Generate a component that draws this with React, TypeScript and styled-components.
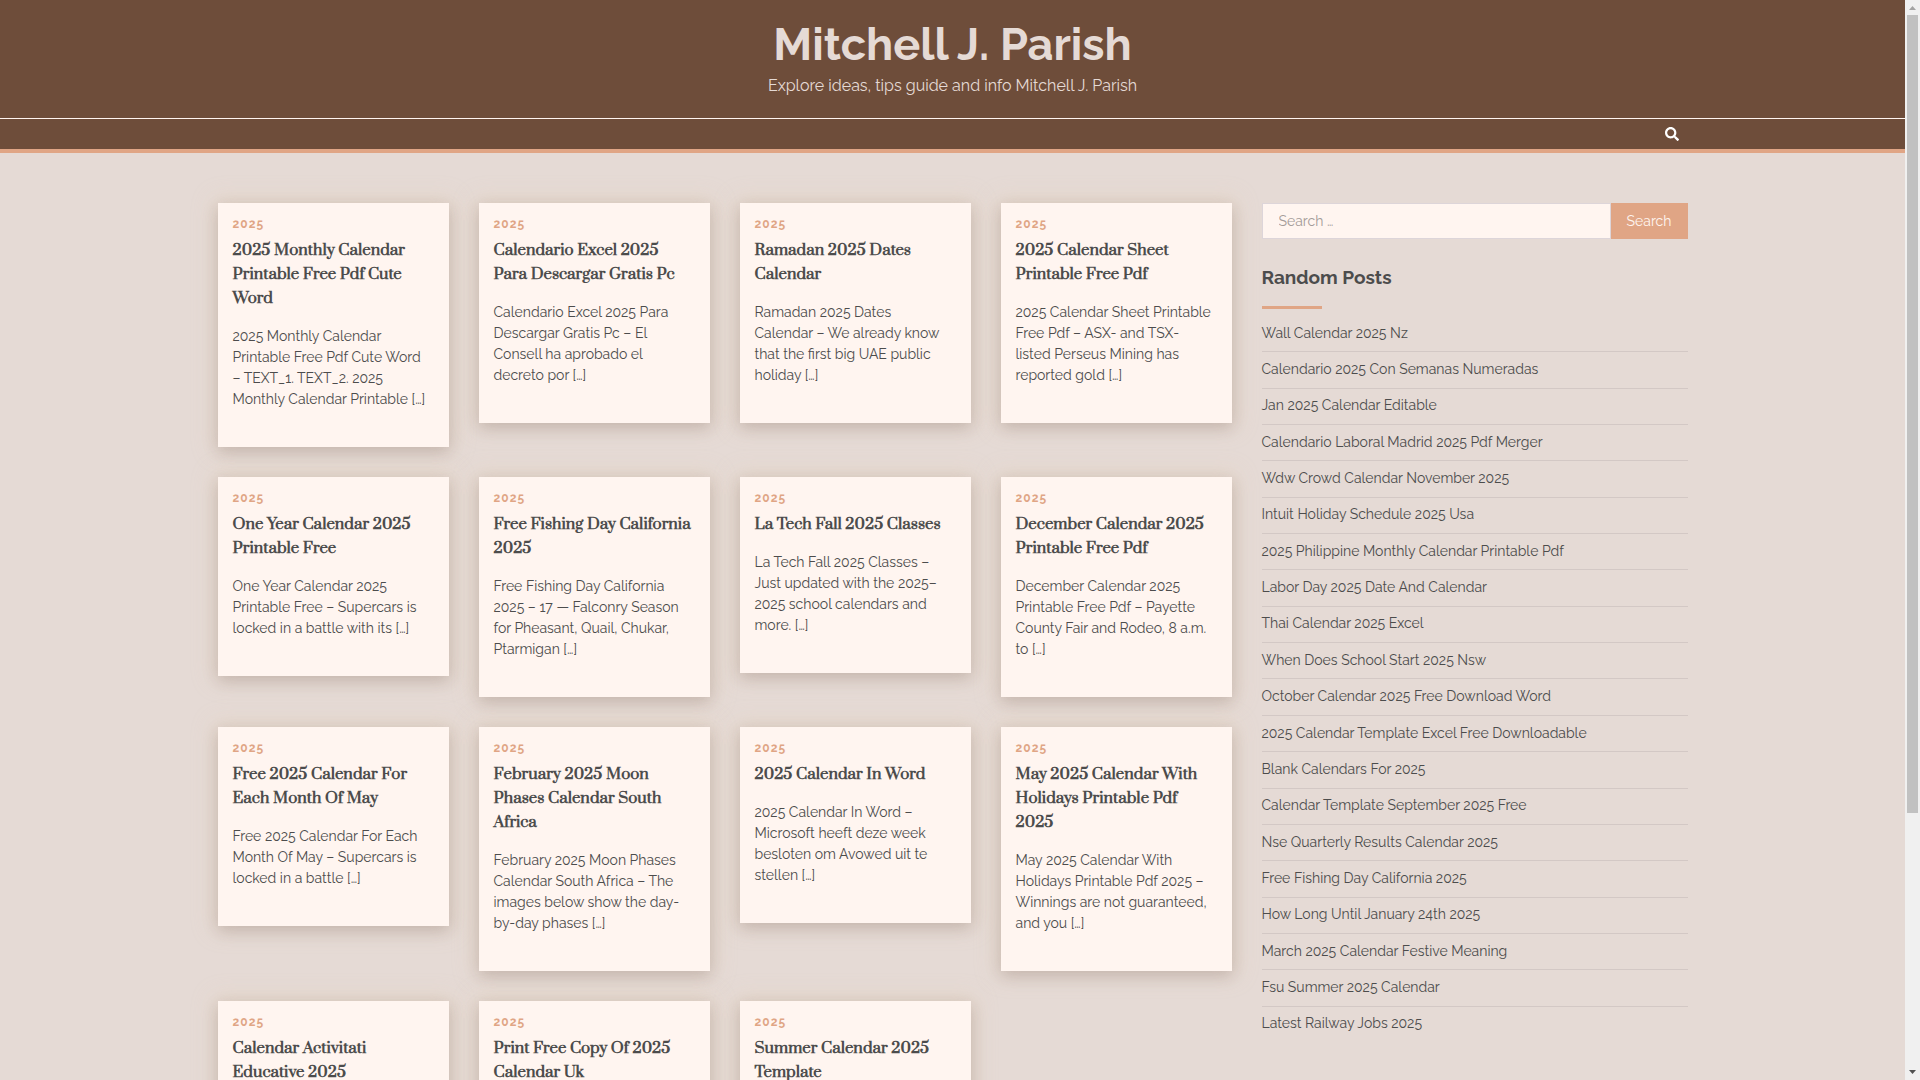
import React from 'react';
import styled, { createGlobalStyle } from 'styled-components';
import { FaSearch } from 'react-icons/fa';

const sans = "Raleway, Lato, 'Open Sans', sans-serif";
const serif = "Prata, 'Liberation Serif', serif";

const color = {
  brown: '#6e4d3a',
  accent: '#e0a585',
  page: '#e5dad5',
  card: '#fff5f0',
  text: '#4c4c4c',
};

const GlobalStyle = createGlobalStyle`
  *, *::before, *::after { box-sizing: border-box; }
  body {
    margin: 0;
    background: ${color.page};
    color: ${color.text};
    font-family: ${sans};
    font-size: 14px;
  }
  a { color: inherit; text-decoration: none; }
`;

const Window = styled.div`
  display: flex;
  height: 100vh;
  overflow: hidden;
`;

const Page = styled.div`
  flex: 1;
  min-width: 0;
  overflow: hidden;
`;

const Masthead = styled.header`
  background: ${color.brown};
  border-bottom: 4px solid ${color.accent};
`;

const Branding = styled.div`
  display: flex;
  flex-direction: column;
  align-items: center;
  gap: 5px;
  padding: 21px 16px 20px;
  border-bottom: 1px solid ${color.card};
  color: ${color.page};
`;

const SiteTitle = styled.h1`
  margin: 0;
  font-size: 45px;
  font-weight: 700;
  line-height: 48px;
`;

const Tagline = styled.p`
  margin: 0;
  font-size: 16px;
  line-height: 24px;
`;

const Container = styled.div`
  width: 100%;
  max-width: 1470px;
  margin: 0 auto;
`;

const Nav = styled.nav`
  display: flex;
  justify-content: flex-end;
`;

const IconButton = styled.button`
  display: flex;
  align-items: center;
  height: 30px;
  padding: 0 9px;
  border: 0;
  background: none;
  color: #fff;
  font-size: 14px;
`;

const Content = styled(Container)`
  display: grid;
  grid-template-columns: minmax(0, 1014fr) minmax(0, 426fr);
  gap: 30px;
  padding-top: 50px;
`;

const Posts = styled.main`
  display: grid;
  grid-template-columns: repeat(4, minmax(0, 1fr));
  align-content: start;
  align-items: start;
  gap: 30px;
`;

const Card = styled.article`
  padding: 12px 15px 37px;
  background: ${color.card};
  box-shadow: 0 5px 15px rgba(50, 30, 40, 0.18), 0 0 20px 4px rgba(229, 205, 175, 0.35);
`;

const Category = styled.a`
  display: block;
  color: ${color.accent};
  font-size: 12px;
  font-weight: 700;
  letter-spacing: 1px;
  line-height: 18px;
`;

const CardTitle = styled.h2`
  margin: 5px 0 16px;
  font-family: ${serif};
  font-size: 15px;
  font-weight: 700;
  line-height: 24px;
`;

const Excerpt = styled.p`
  margin: 0;
  line-height: 21px;
`;

const SearchForm = styled.form`
  display: flex;
  height: 36px;
`;

const HiddenLabel = styled.label`
  position: absolute;
  width: 1px;
  height: 1px;
  overflow: hidden;
  clip-path: inset(50%);
`;

const SearchInput = styled.input`
  flex: 1;
  min-width: 0;
  padding: 0 16px;
  border: 1px solid #ddd5d9;
  border-radius: 0;
  background: ${color.card};
  color: ${color.text};
  font: 14px ${sans};
  &::placeholder { color: #a39b98; opacity: 1; }
`;

const SearchSubmit = styled.button`
  width: 77px;
  padding: 0;
  border: 0;
  background: ${color.accent};
  color: ${color.card};
  font: 14px ${sans};
`;

const WidgetTitle = styled.h2`
  margin: 26px 0 7px;
  font-size: 19px;
  font-weight: 700;
  line-height: 24px;
  &::after {
    content: '';
    display: block;
    width: 60px;
    height: 3px;
    margin-top: 17px;
    background: ${color.accent};
  }
`;

const PostList = styled.ul`
  display: grid;
  grid-auto-rows: 1fr;
  min-height: 727px;
  margin: 0;
  padding: 0;
  list-style: none;
`;

const PostItem = styled.li`
  display: flex;
  align-items: center;
  padding-bottom: 2px;
  border-bottom: 1px solid #d3c8c5;
  &:last-child { border-bottom-color: transparent; }
`;

const Scrollbar = styled.div`
  display: flex;
  flex-direction: column;
  align-items: center;
  width: 15px;
  background: #f0f0f0;
`;

const ScrollArrow = styled.svg`
  flex: none;
  width: 15px;
  height: 15px;
`;

const ScrollTrack = styled.div`
  flex: 1;
  width: 11px;
`;

const ScrollThumb = styled.div`
  height: 76%;
  background: #c1c1c1;
`;

type Post = { title: string[]; excerpt: string[] };

const posts: Post[] = [
  {
    title: ['2025 Monthly Calendar', 'Printable Free Pdf Cute', 'Word'],
    excerpt: ['2025 Monthly Calendar', 'Printable Free Pdf Cute Word', '– TEXT_1. TEXT_2. 2025', 'Monthly Calendar Printable […]'],
  },
  {
    title: ['Calendario Excel 2025', 'Para Descargar Gratis Pc'],
    excerpt: ['Calendario Excel 2025 Para', 'Descargar Gratis Pc – El', 'Consell ha aprobado el', 'decreto por […]'],
  },
  {
    title: ['Ramadan 2025 Dates', 'Calendar'],
    excerpt: ['Ramadan 2025 Dates', 'Calendar – We already know', 'that the first big UAE public', 'holiday […]'],
  },
  {
    title: ['2025 Calendar Sheet', 'Printable Free Pdf'],
    excerpt: ['2025 Calendar Sheet Printable', 'Free Pdf – ASX- and TSX-', 'listed Perseus Mining has', 'reported gold […]'],
  },
  {
    title: ['One Year Calendar 2025', 'Printable Free'],
    excerpt: ['One Year Calendar 2025', 'Printable Free – Supercars is', 'locked in a battle with its […]'],
  },
  {
    title: ['Free Fishing Day California', '2025'],
    excerpt: ['Free Fishing Day California', '2025 – 17 — Falconry Season', 'for Pheasant, Quail, Chukar,', 'Ptarmigan […]'],
  },
  {
    title: ['La Tech Fall 2025 Classes'],
    excerpt: ['La Tech Fall 2025 Classes –', 'Just updated with the 2025–', '2025 school calendars and', 'more. […]'],
  },
  {
    title: ['December Calendar 2025', 'Printable Free Pdf'],
    excerpt: ['December Calendar 2025', 'Printable Free Pdf – Payette', 'County Fair and Rodeo, 8 a.m.', 'to […]'],
  },
  {
    title: ['Free 2025 Calendar For', 'Each Month Of May'],
    excerpt: ['Free 2025 Calendar For Each', 'Month Of May – Supercars is', 'locked in a battle […]'],
  },
  {
    title: ['February 2025 Moon', 'Phases Calendar South', 'Africa'],
    excerpt: ['February 2025 Moon Phases', 'Calendar South Africa – The', 'images below show the day-', 'by-day phases […]'],
  },
  {
    title: ['2025 Calendar In Word'],
    excerpt: ['2025 Calendar In Word –', 'Microsoft heeft deze week', 'besloten om Avowed uit te', 'stellen […]'],
  },
  {
    title: ['May 2025 Calendar With', 'Holidays Printable Pdf', '2025'],
    excerpt: ['May 2025 Calendar With', 'Holidays Printable Pdf 2025 –', 'Winnings are not guaranteed,', 'and you […]'],
  },
  { title: ['Calendar Activitati', 'Educative 2025'], excerpt: [] },
  { title: ['Print Free Copy Of 2025', 'Calendar Uk'], excerpt: [] },
  { title: ['Summer Calendar 2025', 'Template'], excerpt: [] },
];

const randomPosts = [
  'Wall Calendar 2025 Nz',
  'Calendario 2025 Con Semanas Numeradas',
  'Jan 2025 Calendar Editable',
  'Calendario Laboral Madrid 2025 Pdf Merger',
  'Wdw Crowd Calendar November 2025',
  'Intuit Holiday Schedule 2025 Usa',
  '2025 Philippine Monthly Calendar Printable Pdf',
  'Labor Day 2025 Date And Calendar',
  'Thai Calendar 2025 Excel',
  'When Does School Start 2025 Nsw',
  'October Calendar 2025 Free Download Word',
  '2025 Calendar Template Excel Free Downloadable',
  'Blank Calendars For 2025',
  'Calendar Template September 2025 Free',
  'Nse Quarterly Results Calendar 2025',
  'Free Fishing Day California 2025',
  'How Long Until January 24th 2025',
  'March 2025 Calendar Festive Meaning',
  'Fsu Summer 2025 Calendar',
  'Latest Railway Jobs 2025',
];

function Lines({ lines }: { lines: string[] }) {
  return (
    <>
      {lines.map((line, i) => (
        <React.Fragment key={line}>
          {i > 0 && <br />}
          {line}
        </React.Fragment>
      ))}
    </>
  );
}

export default function App() {
  return (
    <>
      <GlobalStyle />
      <Window>
        <Page>
          <Masthead>
            <Branding>
              <SiteTitle><a href="#home">Mitchell J. Parish</a></SiteTitle>
              <Tagline>Explore ideas, tips guide and info Mitchell J. Parish</Tagline>
            </Branding>
            <Container>
              <Nav>
                <IconButton type="button" aria-label="Open search"><FaSearch /></IconButton>
              </Nav>
            </Container>
          </Masthead>
          <Content>
            <Posts>
              {posts.map((post) => (
                <Card key={post.title.join(' ')}>
                  <Category href="#2025">2025</Category>
                  <CardTitle><a href="#post"><Lines lines={post.title} /></a></CardTitle>
                  <Excerpt><Lines lines={post.excerpt} /></Excerpt>
                </Card>
              ))}
            </Posts>
            <aside>
              <SearchForm role="search">
                <HiddenLabel htmlFor="search">Search for:</HiddenLabel>
                <SearchInput id="search" type="search" placeholder="Search …" />
                <SearchSubmit type="button">Search</SearchSubmit>
              </SearchForm>
              <WidgetTitle>Random Posts</WidgetTitle>
              <PostList>
                {randomPosts.map((name) => (
                  <PostItem key={name}><a href="#post">{name}</a></PostItem>
                ))}
              </PostList>
            </aside>
          </Content>
        </Page>
        <Scrollbar aria-hidden="true">
          <ScrollArrow viewBox="0 0 15 15"><path d="M4 10h7L7.500 6z" fill="#a3a3a3" /></ScrollArrow>
          <ScrollTrack><ScrollThumb /></ScrollTrack>
          <ScrollArrow viewBox="0 0 15 15"><path d="M4 5h7L7.500 9z" fill="#505050" /></ScrollArrow>
        </Scrollbar>
      </Window>
    </>
  );
}
